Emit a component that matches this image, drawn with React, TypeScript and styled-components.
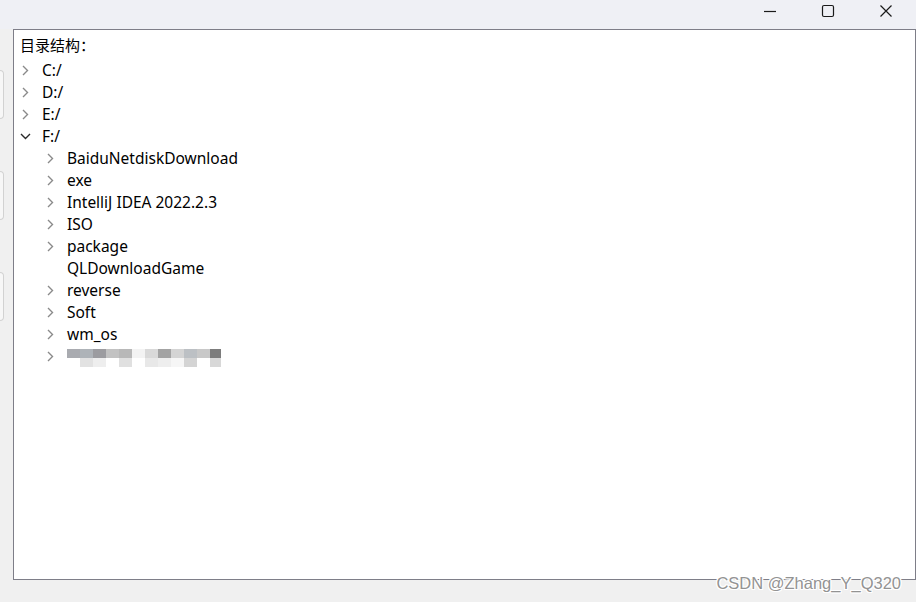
import React from "react";
import styled, { createGlobalStyle } from "styled-components";

const GlobalStyle = createGlobalStyle`
  html, body { margin: 0; padding: 0; }
  body {
    background: #f0f0f0;
    font-family: "Noto Sans", "Noto Sans CJK SC", sans-serif;
    overflow: hidden;
  }
`;

const Window = styled.div`
  position: relative;
  width: 916px;
  height: 602px;
  display: flex;
  flex-direction: column;
  background: #f0f0f0;
`;

const TitleBar = styled.div`
  height: 29px;
  background: #eff0f5;
  display: flex;
  justify-content: flex-end;
  align-items: flex-start;
  padding-right: 1px;
  flex-shrink: 0;
`;

const CaptionButton = styled.div`
  width: 58px;
  height: 21px;
  display: flex;
  align-items: center;
  justify-content: center;
  color: #1a1a1a;
`;

const Body = styled.div`
  display: flex;
  flex-direction: row;
  align-items: flex-start;
`;

const LeftRail = styled.div`
  width: 13px;
  display: flex;
  flex-direction: column;
  gap: 52px;
  padding-top: 41px;
`;

const RailCard = styled.div`
  width: 3px;
  height: 47px;
  border: 1px solid #d2d2d2;
  border-left: none;
  border-radius: 0 4px 4px 0;
  background: #f7f7f7;
`;

const Panel = styled.div`
  width: 898px;
  height: 545px;
  border: 1px solid #7e7e88;
  background: #ffffff;
  padding: 4px 0 0 6px;
  box-sizing: content-box;
  display: flex;
  flex-direction: column;
`;

const Label = styled.div`
  height: 22px;
  line-height: 22px;
  font-size: 15px;
  color: #000;
  margin-bottom: 3px;
  font-family: "Noto Sans CJK SC", sans-serif;
`;

const Row = styled.div<{ $level: number }>`
  height: 22px;
  display: flex;
  align-items: center;
  padding-left: ${(p) => p.$level * 25}px;
  font-size: 15.5px;
  color: #000;
  white-space: nowrap;
`;

const Toggle = styled.div<{ $open?: boolean }>`
  width: 12px;
  height: 22px;
  margin-right: 10px;
  display: flex;
  align-items: center;
  justify-content: center;
  color: ${(p) => (p.$open ? "#2a2a2a" : "#8a8a8a")};
`;

const Mosaic = styled.div`
  display: grid;
  grid-template-columns: repeat(11, 13px) 11px;
  grid-template-rows: 9px 9px;
  margin-top: 4px;
`;

const Tile = styled.div<{ $c: string }>`
  background: ${(p) => p.$c};
`;

const Watermark = styled.div`
  position: absolute;
  right: 15px;
  bottom: 9px;
  font-family: "Liberation Sans", Arial, sans-serif;
  font-size: 16.5px;
  color: #939393;
  text-shadow: 1px 0 #fff, -1px 0 #fff, 0 1px #fff, 0 -1px #fff,
    1px 1px #fff, -1px -1px #fff, 1px -1px #fff, -1px 1px #fff;
`;

const Chevron = ({ open }: { open?: boolean }) =>
  open ? (
    <svg width="11" height="7" viewBox="0 0 11 7" fill="none">
      <path d="M1 1l4.5 4.5L10 1" stroke="currentColor" strokeWidth="1.4" />
    </svg>
  ) : (
    <svg width="7" height="11" viewBox="0 0 7 11" fill="none">
      <path d="M1 1l4.5 4.5L1 10" stroke="currentColor" strokeWidth="1.4" />
    </svg>
  );

type Node = { name: string; level: number; hasChildren: boolean; open?: boolean };

const nodes: Node[] = [
  { name: "C:/", level: 0, hasChildren: true },
  { name: "D:/", level: 0, hasChildren: true },
  { name: "E:/", level: 0, hasChildren: true },
  { name: "F:/", level: 0, hasChildren: true, open: true },
  { name: "BaiduNetdiskDownload", level: 1, hasChildren: true },
  { name: "exe", level: 1, hasChildren: true },
  { name: "IntelliJ IDEA 2022.2.3", level: 1, hasChildren: true },
  { name: "ISO", level: 1, hasChildren: true },
  { name: "package", level: 1, hasChildren: true },
  { name: "QLDownloadGame", level: 1, hasChildren: false },
  { name: "reverse", level: 1, hasChildren: true },
  { name: "Soft", level: 1, hasChildren: true },
  { name: "wm_os", level: 1, hasChildren: true },
];

const topTiles = [
  "#a9abb0", "#aeb3b8", "#9c9ca0", "#c2c2c2", "#b8b8b8", "#f3f3f3",
  "#d9d9d9", "#a3a3a3", "#d4d4d4", "#bcc0c4", "#c8c8c8", "#7c7c7c",
];
const bottomTiles = [
  "#ffffff", "#e2e2e2", "#eeeeee", "#ffffff", "#e0e0e0", "#ffffff",
  "#e8e8e8", "#eeeeee", "#f6f6f6", "#d4d4d4", "#ffffff", "#d8d8d8",
];

export default function App() {
  return (
    <>
      <GlobalStyle />
      <Window>
        <TitleBar>
          <CaptionButton>
            <svg width="14" height="14" viewBox="0 0 14 14">
              <path d="M1 7.5h12" stroke="currentColor" strokeWidth="1.2" />
            </svg>
          </CaptionButton>
          <CaptionButton>
            <svg width="14" height="14" viewBox="0 0 14 14" fill="none">
              <rect x="1.5" y="1.5" width="11" height="11" rx="1.5" stroke="currentColor" strokeWidth="1.2" />
            </svg>
          </CaptionButton>
          <CaptionButton>
            <svg width="14" height="14" viewBox="0 0 14 14" fill="none">
              <path d="M1.5 1.5l11 11M12.5 1.5l-11 11" stroke="currentColor" strokeWidth="1.2" />
            </svg>
          </CaptionButton>
        </TitleBar>
        <Body>
          <LeftRail>
            <RailCard />
            <RailCard />
            <RailCard />
          </LeftRail>
          <Panel>
            <Label>目录结构：</Label>
            {nodes.map((n) => (
              <Row key={n.name} $level={n.level}>
                <Toggle $open={n.open}>{n.hasChildren && <Chevron open={n.open} />}</Toggle>
                {n.name}
              </Row>
            ))}
            <Row $level={1}>
              <Toggle>
                <Chevron />
              </Toggle>
              <Mosaic>
                {topTiles.map((c, i) => (
                  <Tile key={"t" + i} $c={c} />
                ))}
                {bottomTiles.map((c, i) => (
                  <Tile key={"b" + i} $c={c} />
                ))}
              </Mosaic>
            </Row>
          </Panel>
        </Body>
        <Watermark>CSDN @Zhang_Y_Q320</Watermark>
      </Window>
    </>
  );
}
